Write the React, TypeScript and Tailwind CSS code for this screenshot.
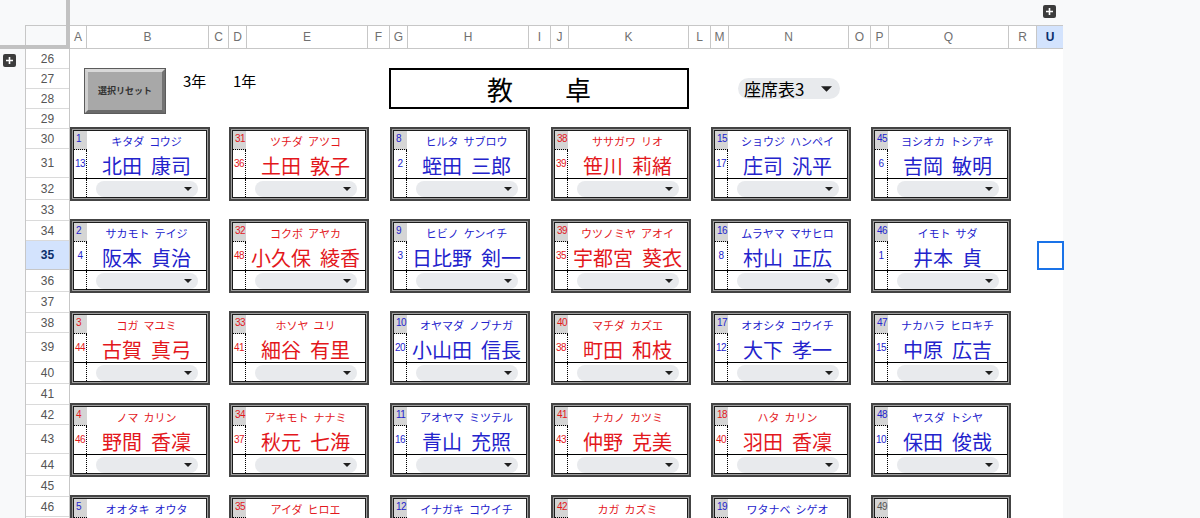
import React from 'react';

type Tone = 'blue' | 'red' | 'gray';
type Seat = { no: number; sub?: number; kana?: string; name?: string; tone: Tone };

const toneText: Record<Tone, string> = {
  blue: 'text-[#2323cc]',
  red: 'text-[#e3171c]',
  gray: 'text-[#555555]',
};

const columns = [
  { label: 'A', w: 'w-[17px]' },
  { label: 'B', w: 'w-[122px]' },
  { label: 'C', w: 'w-[20px]' },
  { label: 'D', w: 'w-[18px]' },
  { label: 'E', w: 'w-[121px]' },
  { label: 'F', w: 'w-[22px]' },
  { label: 'G', w: 'w-[18px]' },
  { label: 'H', w: 'w-[121px]' },
  { label: 'I', w: 'w-[22px]' },
  { label: 'J', w: 'w-[18px]' },
  { label: 'K', w: 'w-[120px]' },
  { label: 'L', w: 'w-[22px]' },
  { label: 'M', w: 'w-[18px]' },
  { label: 'N', w: 'w-[120px]' },
  { label: 'O', w: 'w-[22px]' },
  { label: 'P', w: 'w-[18px]' },
  { label: 'Q', w: 'w-[120px]' },
  { label: 'R', w: 'w-[28px]' },
  { label: 'U', w: 'w-[26px]' },
];

// row heights: 4 plain rows, then blocks of (kana, name, select, spacer)
const blockHeights = ['h-[20px]', 'h-[29px]', 'h-[22px]', 'h-[21px]'];
const rowNumbers = Array.from({ length: 21 }, (_, i) => {
  const n = 26 + i;
  const h = n < 30 || n === 46 ? 'h-[20px]' : blockHeights[(n - 30) % 4];
  return { n, h };
});

// left offset of each card in a row
const cardGaps = ['ml-0', 'ml-[19px]', 'ml-[21px]', 'ml-[21px]', 'ml-[20px]', 'ml-[20px]'];

const seatRows: Seat[][] = [
  [
    { no: 1, sub: 13, kana: 'キタダ コウジ', name: '北田 康司', tone: 'blue' },
    { no: 31, sub: 36, kana: 'ツチダ アツコ', name: '土田 敦子', tone: 'red' },
    { no: 8, sub: 2, kana: 'ヒルタ サブロウ', name: '蛭田 三郎', tone: 'blue' },
    { no: 38, sub: 39, kana: 'ササガワ リオ', name: '笹川 莉緒', tone: 'red' },
    { no: 15, sub: 17, kana: 'ショウジ ハンペイ', name: '庄司 汎平', tone: 'blue' },
    { no: 45, sub: 6, kana: 'ヨシオカ トシアキ', name: '吉岡 敏明', tone: 'blue' },
  ],
  [
    { no: 2, sub: 4, kana: 'サカモト テイジ', name: '阪本 貞治', tone: 'blue' },
    { no: 32, sub: 48, kana: 'コクボ アヤカ', name: '小久保 綾香', tone: 'red' },
    { no: 9, sub: 3, kana: 'ヒビノ ケンイチ', name: '日比野 剣一', tone: 'blue' },
    { no: 39, sub: 35, kana: 'ウツノミヤ アオイ', name: '宇都宮 葵衣', tone: 'red' },
    { no: 16, sub: 8, kana: 'ムラヤマ マサヒロ', name: '村山 正広', tone: 'blue' },
    { no: 46, sub: 1, kana: 'イモト サダ', name: '井本 貞', tone: 'blue' },
  ],
  [
    { no: 3, sub: 44, kana: 'コガ マユミ', name: '古賀 真弓', tone: 'red' },
    { no: 33, sub: 41, kana: 'ホソヤ ユリ', name: '細谷 有里', tone: 'red' },
    { no: 10, sub: 20, kana: 'オヤマダ ノブナガ', name: '小山田 信長', tone: 'blue' },
    { no: 40, sub: 38, kana: 'マチダ カズエ', name: '町田 和枝', tone: 'red' },
    { no: 17, sub: 12, kana: 'オオシタ コウイチ', name: '大下 孝一', tone: 'blue' },
    { no: 47, sub: 15, kana: 'ナカハラ ヒロキチ', name: '中原 広吉', tone: 'blue' },
  ],
  [
    { no: 4, sub: 46, kana: 'ノマ カリン', name: '野間 香凜', tone: 'red' },
    { no: 34, sub: 37, kana: 'アキモト ナナミ', name: '秋元 七海', tone: 'red' },
    { no: 11, sub: 16, kana: 'アオヤマ ミツテル', name: '青山 充照', tone: 'blue' },
    { no: 41, sub: 43, kana: 'ナカノ カツミ', name: '仲野 克美', tone: 'red' },
    { no: 18, sub: 40, kana: 'ハタ カリン', name: '羽田 香凜', tone: 'red' },
    { no: 48, sub: 10, kana: 'ヤスダ トシヤ', name: '保田 俊哉', tone: 'blue' },
  ],
  [
    { no: 5, kana: 'オオタキ オウタ', tone: 'blue' },
    { no: 35, kana: 'アイダ ヒロエ', tone: 'red' },
    { no: 12, kana: 'イナガキ コウイチ', tone: 'blue' },
    { no: 42, kana: 'カガ カズミ', tone: 'red' },
    { no: 19, kana: 'ワタナベ シゲオ', tone: 'blue' },
    { no: 49, tone: 'gray' },
  ],
];

function Caret({ className }: { className: string }) {
  return (
    <svg viewBox="0 0 8 4" className={className}>
      <path d="M0 0h8L4 4z" fill="#1f1f1f" />
    </svg>
  );
}

function PlusBox() {
  return (
    <div className="flex h-[13px] w-[13px] items-center justify-center rounded-[2px] bg-[#3c3c3c]">
      <svg viewBox="0 0 9 9" className="h-[9px] w-[9px]">
        <path d="M4.5 1v7M1 4.5h7" stroke="#fff" strokeWidth="1.6" />
      </svg>
    </div>
  );
}

// family / given name split with a wider gap, like the sheet's spacing
function Spaced({ text, gap }: { text?: string; gap: string }) {
  if (!text) return null;
  return (
    <span className={`flex ${gap}`}>
      {text.split(' ').map((part) => (
        <span key={part}>{part}</span>
      ))}
    </span>
  );
}

function SeatCard({ seat, gap }: { seat: Seat; gap: string }) {
  const c = toneText[seat.tone];
  return (
    <div className={`${gap} h-[74px] w-[140px] shrink-0 border-2 border-[#444] bg-[#9f9f9f] p-px`}>
      <div className="flex h-full flex-col border border-[#1c1c1c] bg-white">
        <div className="flex h-[19px]">
          <div
            className={`w-[13px] shrink-0 border-b border-dotted border-black bg-[#d5d5d5] pl-[2px] pt-[3px] font-['Liberation_Sans',sans-serif] text-[10px] leading-none tracking-[-0.5px] ${c}`}
          >
            {seat.no}
          </div>
          <div className={`flex flex-1 items-center justify-center pt-px text-[11px] leading-none whitespace-nowrap ${c}`}>
            <Spaced text={seat.kana} gap="gap-[5px]" />
          </div>
        </div>
        <div className="flex h-[29px] border-b border-black">
          <div
            className={`flex w-[13px] shrink-0 items-center justify-center border-r border-dotted border-black font-['Liberation_Sans',sans-serif] text-[10px] leading-none tracking-[-0.5px] ${c}`}
          >
            {seat.sub}
          </div>
          <div className={`flex flex-1 items-center justify-center pt-[3px] text-[20px] leading-none whitespace-nowrap ${c}`}>
            <Spaced text={seat.name} gap="gap-[9px]" />
          </div>
        </div>
        <div className="flex flex-1">
          <div className="w-[13px] shrink-0 border-r border-dotted border-black" />
          <div className="flex-1 pl-[9px] pr-[8px] pt-[2px]">
            <div className="flex h-[16px] items-center justify-end rounded-full bg-[#e8eaed] pr-[6px]">
              <Caret className="h-[4px] w-[8px]" />
            </div>
          </div>
        </div>
      </div>
    </div>
  );
}

export default function App() {
  return (
    <div className="relative h-[518px] w-[1200px] overflow-hidden bg-[#f8f9fa] font-['Noto_Sans_CJK_JP',sans-serif]">
      {/* frozen corner + column headers */}
      <div className="flex h-[49px]">
        <div className="flex w-[66px] flex-col">
          <div className="h-[25px]" />
          <div className="ml-[25px] h-[20px] border-l border-t border-[#c7c7c7] bg-[#f8f9fa]" />
          <div className="h-[4px] bg-[#c2c2c2]" />
        </div>
        <div className="h-[49px] w-[4px] bg-[#c2c2c2]" />
        <div className="flex w-[993px] flex-col">
          <div className="flex h-[25px] items-start justify-end pr-[7px] pt-[5px]">
            <PlusBox />
          </div>
          <div className="flex h-[24px] border-y border-[#c7c7c7] bg-white font-['Liberation_Sans',sans-serif] text-[12px] text-[#707070]">
            {columns.map((col) =>
              col.label === 'U' ? (
                <div key={col.label} className={`${col.w} flex items-center justify-center bg-[#d3e3fd] font-bold text-[#0b2f6b]`}>
                  {col.label}
                </div>
              ) : (
                <div key={col.label} className={`${col.w} flex items-center justify-center border-r border-[#c7c7c7]`}>
                  {col.label}
                </div>
              ),
            )}
          </div>
        </div>
      </div>

      <div className="flex h-[469px]">
        <div className="w-[25px] pl-[3px] pt-[5px]">
          <PlusBox />
        </div>

        {/* row numbers */}
        <div className="w-[45px] border-x border-[#c7c7c7] bg-white font-['Liberation_Sans',sans-serif] text-[12px] text-[#555]">
          {rowNumbers.map((r) =>
            r.n === 35 ? (
              <div key={r.n} className={`${r.h} flex items-center justify-center border-b border-[#c7c7c7] bg-[#d3e3fd] font-bold text-[#0b2f6b]`}>
                {r.n}
              </div>
            ) : (
              <div key={r.n} className={`${r.h} flex items-center justify-center border-b border-[#dadada]`}>
                {r.n}
              </div>
            ),
          )}
        </div>

        {/* sheet */}
        <div className="relative w-[993px] bg-white text-black">
          <div className="flex h-[78px] items-start pt-[19px]">
            <div className="ml-[14px] h-[46px] w-[82px] border border-[#5c5c5c]">
              <div className="flex h-full items-center justify-center border-[3px] border-b-[#6a6a6a] border-l-[#cfcfcf] border-r-[#737373] border-t-[#d8d8d8] bg-[#a8a8a8] text-[9px] font-bold text-[#333]">
                選択リセット
              </div>
            </div>
            <span className="ml-[17px] mt-[3px] w-[50px] text-[15px] leading-[20px]">3年</span>
            <span className="mt-[3px] w-[156px] text-[15px] leading-[20px]">1年</span>
            <div className="flex h-[41px] w-[300px] items-center justify-center border-2 border-black text-[26px] leading-none">
              教　　卓
            </div>
            <div className="ml-[49px] mt-[10px] flex h-[21px] w-[102px] items-center rounded-full bg-[#e8eaed] pl-[6px] pr-[8px] text-[17px] leading-none">
              <span>座席表3</span>
              <Caret className="ml-auto h-[6px] w-[11px]" />
            </div>
          </div>

          <div className="flex flex-col gap-[18px]">
            {seatRows.map((row, ri) => (
              <div key={ri} className="flex">
                {row.map((seat, ci) => (
                  <SeatCard key={seat.no} seat={seat} gap={cardGaps[ci]} />
                ))}
              </div>
            ))}
          </div>

          {/* active cell U35 */}
          <div className="absolute left-[967px] top-[192px] h-[29px] w-[27px] border-2 border-[#1a73e8]" />
        </div>
      </div>
    </div>
  );
}
